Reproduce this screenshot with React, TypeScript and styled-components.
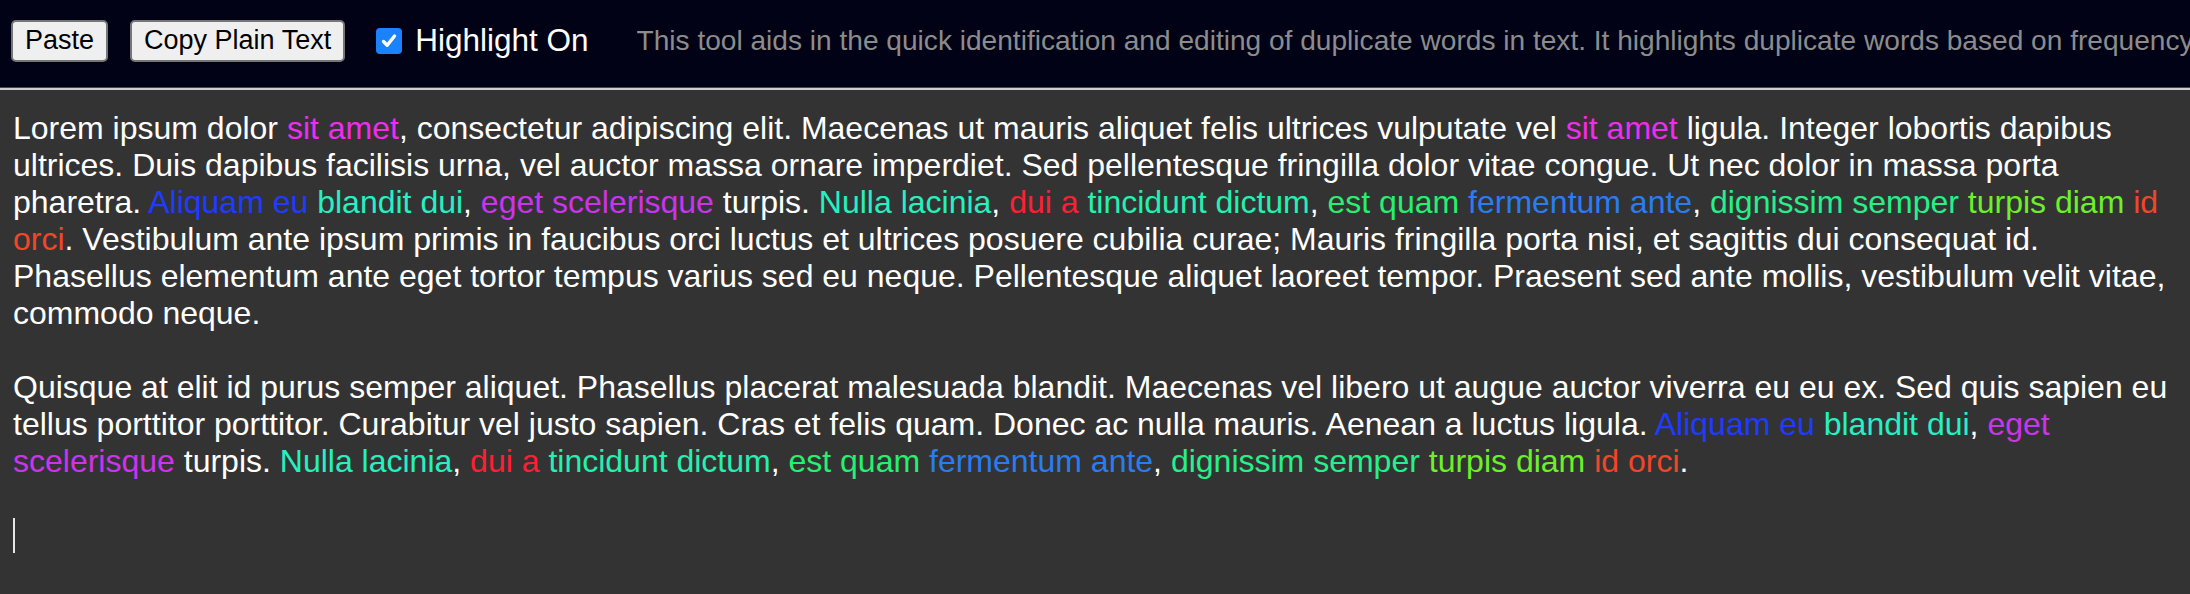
import { useState } from 'react'
import styled, { createGlobalStyle } from 'styled-components'

type Segment = string | { text: string; color: string }

const colors: Record<string, string> = {
  'sit amet': '#f02cf0',
  'Aliquam eu': '#1e3cff',
  'blandit dui': '#26f0c4',
  'eget scelerisque': '#cc33ee',
  'Nulla lacinia': '#26f0c0',
  'dui a': '#ff1f33',
  'tincidunt dictum': '#26f0b0',
  'est quam': '#26f070',
  'fermentum ante': '#2a7df0',
  'dignissim semper': '#26f08a',
  'turpis diam': '#6cf02a',
  'id orci': '#f0462a',
}

const hl = (text: string): Segment => ({ text, color: colors[text] })

const repeatedTail: Segment[] = [
  hl('Aliquam eu'),
  ' ',
  hl('blandit dui'),
  ', ',
  hl('eget scelerisque'),
  ' turpis. ',
  hl('Nulla lacinia'),
  ', ',
  hl('dui a'),
  ' ',
  hl('tincidunt dictum'),
  ', ',
  hl('est quam'),
  ' ',
  hl('fermentum ante'),
  ', ',
  hl('dignissim semper'),
  ' ',
  hl('turpis diam'),
  ' ',
  hl('id orci'),
]

const paragraphs: Segment[][] = [
  [
    'Lorem ipsum dolor ',
    hl('sit amet'),
    ', consectetur adipiscing elit. Maecenas ut mauris aliquet felis ultrices vulputate vel ',
    hl('sit amet'),
    ' ligula. Integer lobortis dapibus ultrices. Duis dapibus facilisis urna, vel auctor massa ornare imperdiet. Sed pellentesque fringilla dolor vitae congue. Ut nec dolor in massa porta pharetra. ',
    ...repeatedTail,
    '. Vestibulum ante ipsum primis in faucibus orci luctus et ultrices posuere cubilia curae; Mauris fringilla porta nisi, et sagittis dui consequat id. Phasellus elementum ante eget tortor tempus varius sed eu neque. Pellentesque aliquet laoreet tempor. Praesent sed ante mollis, vestibulum velit vitae, commodo neque.',
  ],
  [
    'Quisque at elit id purus semper aliquet. Phasellus placerat malesuada blandit. Maecenas vel libero ut augue auctor viverra eu eu ex. Sed quis sapien eu tellus porttitor porttitor. Curabitur vel justo sapien. Cras et felis quam. Donec ac nulla mauris. Aenean a luctus ligula. ',
    ...repeatedTail,
    '.',
  ],
]

export default function App() {
  const [highlight, setHighlight] = useState(true)

  return (
    <>
      <GlobalStyle />
      <Header>
        <Button type='button'>Paste</Button>
        <Button type='button'>Copy Plain Text</Button>
        <Toggle>
          <HiddenInput type='checkbox' checked={highlight} onChange={() => setHighlight(!highlight)} />
          <Box $on={highlight}>
            {highlight ? (
              <svg width='20' height='20' viewBox='0 0 20 20'>
                <path d='M4.5 10.5 L8.2 14.2 L15.5 5' fill='none' stroke='#fff' strokeWidth='3.4' strokeLinecap='round' strokeLinejoin='round' />
              </svg>
            ) : null}
          </Box>
          Highlight On
        </Toggle>
        <Description>
          This tool aids in the quick identification and editing of duplicate words in text. It highlights duplicate words based on frequency and lets you edit them in place.
        </Description>
      </Header>
      <Rule />
      <Editor>
        {paragraphs.map((segments, i) => (
          <Paragraph key={i}>
            {segments.map((seg, j) =>
              typeof seg === 'string' ? (
                seg
              ) : (
                <Word key={j} $color={highlight ? seg.color : '#fff'}>
                  {seg.text}
                </Word>
              ),
            )}
          </Paragraph>
        ))}
        <Paragraph>
          <Caret />
        </Paragraph>
      </Editor>
    </>
  )
}

const GlobalStyle = createGlobalStyle`
  html, body {
    margin: 0;
    padding: 0;
    background: #333333;
    overflow: hidden;
  }
  body {
    font-family: 'Liberation Sans', Arial, sans-serif;
  }
`
const Header = styled.header`
  display: flex;
  align-items: center;
  height: 88px;
  box-sizing: border-box;
  padding: 0 0 6px 11px;
  background: #020216;
  border-bottom: 1px solid #4a4a4a;
  white-space: nowrap;
  overflow: hidden;
`
const Rule = styled.div`
  height: 2px;
  background: #cfcfcf;
`
const Button = styled.button`
  font-family: 'Liberation Sans', Arial, sans-serif;
  font-size: 27px;
  color: #000;
  background: #efefef;
  border: 2px solid #767676;
  border-radius: 5px;
  height: 42px;
  padding: 0 12px;
  margin-right: 22px;
  flex-shrink: 0;
`
const Toggle = styled.label`
  display: flex;
  align-items: center;
  gap: 13px;
  margin-left: 9px;
  font-size: 31.5px;
  color: #fff;
  flex-shrink: 0;
`
const HiddenInput = styled.input`
  display: none;
`
const Box = styled.span<{ $on: boolean }>`
  display: flex;
  align-items: center;
  justify-content: center;
  width: 26px;
  height: 26px;
  border-radius: 4px;
  box-sizing: border-box;
  background: ${p => (p.$on ? '#1a82fb' : '#fff')};
  border: ${p => (p.$on ? 'none' : '2px solid #767676')};
`
const Description = styled.div`
  margin-left: 48px;
  font-size: 28.1px;
  color: #8c8c8c;
  min-width: 0;
  overflow: hidden;
`
const Editor = styled.div`
  padding: 20px 8px 20px 13px;
  color: #fff;
  font-size: 32px;
  line-height: 37px;
`
const Paragraph = styled.div`
  margin-bottom: 37px;
  min-height: 37px;
`
const Word = styled.span<{ $color: string }>`
  color: ${p => p.$color};
`
const Caret = styled.span`
  display: inline-block;
  width: 1.5px;
  height: 35px;
  background: #e6e6e6;
  vertical-align: top;
  margin-top: 0.5px;
`
